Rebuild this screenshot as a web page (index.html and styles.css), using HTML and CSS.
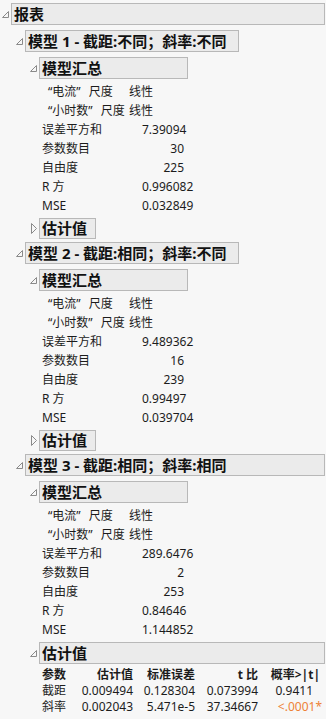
FILE: index.html
```html
<!DOCTYPE html>
<html lang="zh">
<head>
    <meta charset="UTF-8">
    <meta name="viewport" content="width=device-width, initial-scale=1.0">
    <title>报表</title>
    <link rel="stylesheet" href="styles.css">
</head>
<body>
    <div class="outline">
        <div class="ol-head">
            <span class="tri"><svg width="7" height="7" viewBox="0 0 7 7"><path d="M0.5 6.5H6.5V0.5Z"/></svg></span>
            <div class="ol-title full">报表</div>
        </div>
        <div class="ol-body">

            <!-- 模型 1 -->
            <div class="outline">
                <div class="ol-head">
                    <span class="tri"><svg width="7" height="7" viewBox="0 0 7 7"><path d="M0.5 6.5H6.5V0.5Z"/></svg></span>
                    <div class="ol-title title-model">模型 1 - 截距:不同；斜率:不同</div>
                </div>
                <div class="ol-body">
                    <div class="outline">
                        <div class="ol-head">
                            <span class="tri"><svg width="7" height="7" viewBox="0 0 7 7"><path d="M0.5 6.5H6.5V0.5Z"/></svg></span>
                            <div class="ol-title title-summary">模型汇总</div>
                        </div>
                        <div class="ol-body">
                            <div class="scale-table">
                                <span><span class="q">“电流”</span> 尺度</span><span>线性</span>
                                <span><span class="q">“小时数”</span> 尺度</span><span>线性</span>
                            </div>
                            <div class="stat-table">
                                <span>误差平方和</span><span class="num">7.39094</span>
                                <span>参数数目</span><span class="num">30</span>
                                <span>自由度</span><span class="num">225</span>
                                <span>R 方</span><span class="num">0.996082</span>
                                <span>MSE</span><span class="num">0.032849</span>
                            </div>
                        </div>
                    </div>
                    <div class="outline">
                        <div class="ol-head">
                            <span class="tri"><svg width="6" height="11" viewBox="0 0 6 11"><path d="M0.5 0.5L5.5 5.5L0.5 10.5Z"/></svg></span>
                            <div class="ol-title title-est">估计值</div>
                        </div>
                    </div>
                </div>
            </div>

            <!-- 模型 2 -->
            <div class="outline">
                <div class="ol-head">
                    <span class="tri"><svg width="7" height="7" viewBox="0 0 7 7"><path d="M0.5 6.5H6.5V0.5Z"/></svg></span>
                    <div class="ol-title title-model">模型 2 - 截距:相同；斜率:不同</div>
                </div>
                <div class="ol-body">
                    <div class="outline">
                        <div class="ol-head">
                            <span class="tri"><svg width="7" height="7" viewBox="0 0 7 7"><path d="M0.5 6.5H6.5V0.5Z"/></svg></span>
                            <div class="ol-title title-summary">模型汇总</div>
                        </div>
                        <div class="ol-body">
                            <div class="scale-table">
                                <span><span class="q">“电流”</span> 尺度</span><span>线性</span>
                                <span><span class="q">“小时数”</span> 尺度</span><span>线性</span>
                            </div>
                            <div class="stat-table">
                                <span>误差平方和</span><span class="num">9.489362</span>
                                <span>参数数目</span><span class="num">16</span>
                                <span>自由度</span><span class="num">239</span>
                                <span>R 方</span><span class="num">0.99497</span>
                                <span>MSE</span><span class="num">0.039704</span>
                            </div>
                        </div>
                    </div>
                    <div class="outline">
                        <div class="ol-head">
                            <span class="tri"><svg width="6" height="11" viewBox="0 0 6 11"><path d="M0.5 0.5L5.5 5.5L0.5 10.5Z"/></svg></span>
                            <div class="ol-title title-est">估计值</div>
                        </div>
                    </div>
                </div>
            </div>

            <!-- 模型 3 -->
            <div class="outline">
                <div class="ol-head">
                    <span class="tri"><svg width="7" height="7" viewBox="0 0 7 7"><path d="M0.5 6.5H6.5V0.5Z"/></svg></span>
                    <div class="ol-title full">模型 3 - 截距:相同；斜率:相同</div>
                </div>
                <div class="ol-body">
                    <div class="outline">
                        <div class="ol-head">
                            <span class="tri"><svg width="7" height="7" viewBox="0 0 7 7"><path d="M0.5 6.5H6.5V0.5Z"/></svg></span>
                            <div class="ol-title title-summary">模型汇总</div>
                        </div>
                        <div class="ol-body">
                            <div class="scale-table">
                                <span><span class="q">“电流”</span> 尺度</span><span>线性</span>
                                <span><span class="q">“小时数”</span> 尺度</span><span>线性</span>
                            </div>
                            <div class="stat-table">
                                <span>误差平方和</span><span class="num">289.6476</span>
                                <span>参数数目</span><span class="num">2</span>
                                <span>自由度</span><span class="num">253</span>
                                <span>R 方</span><span class="num">0.84646</span>
                                <span>MSE</span><span class="num">1.144852</span>
                            </div>
                        </div>
                    </div>
                    <div class="outline">
                        <div class="ol-head">
                            <span class="tri"><svg width="7" height="7" viewBox="0 0 7 7"><path d="M0.5 6.5H6.5V0.5Z"/></svg></span>
                            <div class="ol-title full">估计值</div>
                        </div>
                        <div class="ol-body">
                            <div class="est-table">
                                <span class="th">参数</span>
                                <span class="th num">估计值</span>
                                <span class="th num">标准误差</span>
                                <span class="th num">t 比</span>
                                <span class="th num prob-head">概率&gt;|t|</span>

                                <span>截距</span>
                                <span class="num">0.009494</span>
                                <span class="num">0.128304</span>
                                <span class="num">0.073994</span>
                                <span class="num prob">0.9411</span>

                                <span>斜率</span>
                                <span class="num">0.002043</span>
                                <span class="num">5.471e-5</span>
                                <span class="num">37.34667</span>
                                <span class="num prob sig">&lt;.0001*</span>
                            </div>
                        </div>
                    </div>
                </div>
            </div>

        </div>
    </div>
</body>
</html>
```

FILE: styles.css
```css
/* 全局样式 */
body {
    font-family: 'Noto Sans', 'Noto Sans CJK SC', sans-serif;
    font-size: 12px;
    background-color: #f7f7f7;
    color: #1c1c1c;
    margin: 0;
    padding: 3px 1px 0 0;
}

/* 大纲节点 */
.ol-head {
    display: flex;
    align-items: center;
}

.tri {
    width: 11px;
    flex: none;
    display: flex;
    justify-content: flex-end;
    padding-right: 2px;
    box-sizing: border-box;
}

.tri svg {
    display: block;
}

.tri path {
    fill: none;
    stroke: #8a8a8a;
    stroke-width: 1;
}

.ol-title {
    height: 22px;
    line-height: 20px;
    box-sizing: border-box;
    border: 1px solid #b8b8b8;
    background-color: #ebebeb;
    padding-left: 2px;
    font-size: 15px;
    font-weight: bold;
    color: #111;
    white-space: nowrap;
}

.ol-title.full {
    flex: 1;
}

.title-model {
    width: 214px;
}

.title-summary {
    width: 149px;
}

/* 折叠的估计值 */
.title-est {
    width: 57px;
    height: 21px;
    line-height: 19px;
}

.ol-body {
    padding-left: 14px;
}

.ol-body > * {
    margin-top: 3px;
}

.ol-body > .outline:first-child {
    margin-top: 5px;
}

/* 尺度表 */
.scale-table {
    display: grid;
    grid-template-columns: 81px auto;
    padding-left: 6px;
}

.scale-table .q {
    margin-right: 5px;
}

.scale-table > span,
.stat-table > span {
    height: 19px;
    line-height: 19px;
}

/* 汇总表 */
.stat-table {
    display: grid;
    grid-template-columns: 100px 42px;
    width: 142px;
    margin-top: 0 !important;
}

.num {
    text-align: right;
    white-space: nowrap;
}

/* 估计值表 */
.est-table {
    display: grid;
    grid-template-columns: 38px 53px 62px 63px 64px;
}

.est-table span {
    height: 16px;
    line-height: 16px;
}

.est-table .th {
    font-weight: bold;
}

.est-table .prob-head {
    padding-right: 2px;
}

.est-table .prob {
    padding-right: 9px;
}

.est-table .sig {
    padding-right: 0;
    color: #ee8236;
}
```
